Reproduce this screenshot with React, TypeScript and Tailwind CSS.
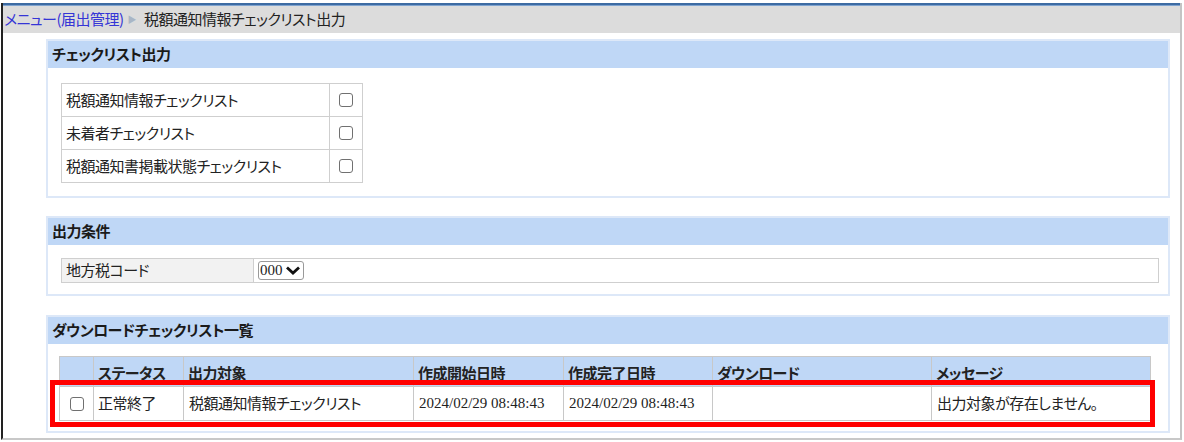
import React from "react";

const jp = { fontFamily: '"Noto Sans CJK JP", "Noto Sans", sans-serif', fontFeatureSettings: '"palt"', letterSpacing: "-0.5px" } as React.CSSProperties;
const serif = { fontFamily: '"Liberation Serif", serif', letterSpacing: "0px" } as React.CSSProperties;

function Box() {
  return <span className="inline-block w-[14px] h-[14px] border border-[#707070] rounded-[3px] bg-white" />;
}

function Section({ title, children, className }: { title: string; children: React.ReactNode; className?: string }) {
  return (
    <div className={"border-2 border-[#dde8f8] " + (className ?? "")}>
      <div className="h-[27px] bg-[#bfd7f6] flex items-center pl-[4px] text-[15px] font-bold text-[#1a1a1a]">{title}</div>
      {children}
    </div>
  );
}

export default function App() {
  const cols = [
    { w: 34, t: "" },
    { w: 90, t: "ステータス" },
    { w: 230, t: "出力対象" },
    { w: 150, t: "作成開始日時" },
    { w: 149, t: "作成完了日時" },
    { w: 219, t: "ダウンロード" },
    { w: 219, t: "メッセージ" },
  ];
  return (
    <div className="w-[1184px] h-[442px] bg-white overflow-hidden pt-[3px] text-[#222]" style={jp}>
      <div className="ml-[1px] w-[1181px] h-[437px] border-l-2 border-l-[#222] border-r-2 border-r-[#c4c4c4] border-b-2 border-b-[#c8c8c8]">
        <div className="h-[3px] border-t-2 border-t-[#3d6ba3] bg-[#7fa3cf]" />
        <div className="h-[27px] bg-[#dcdcdc] flex items-center pl-[1px] text-[15px]">
          <span className="text-[#3535d6]">メニュー(届出管理)</span>
          <span className="text-[#a9b6c6] text-[9px] ml-[4px] mr-[8px]">▶</span>
          <span className="text-[#222]">税額通知情報チェックリスト出力</span>
        </div>
        <div className="ml-[43px] mr-[10px] mt-[6px]">
          <Section title="チェックリスト出力">
            <div className="pt-[15px] pb-[13px] pl-[13px]">
              <table className="border-collapse text-[15px]">
                <tbody>
                  {["税額通知情報チェックリスト", "未着者チェックリスト", "税額通知書掲載状態チェックリスト"].map((t) => (
                    <tr key={t} className="h-[33px]">
                      <td className="border border-[#cfcfcf] w-[268px] pl-[4px] p-0">{t}</td>
                      <td className="border border-[#cfcfcf] w-[33px] text-center p-0 align-middle">
                        <div className="flex justify-center"><Box /></div>
                      </td>
                    </tr>
                  ))}
                </tbody>
              </table>
            </div>
          </Section>

          <Section title="出力条件" className="mt-[18px]">
            <div className="pt-[13px] pb-[11px] pl-[13px] pr-[9px]">
              <div className="flex h-[25px] border border-[#cfcfcf] text-[15px]">
                <div className="w-[192px] bg-[#f2f2f2] border-r border-r-[#cfcfcf] flex items-center pl-[4px]">地方税コード</div>
                <div className="flex items-center pl-[4px]">
                  <div className="h-[19px] w-[46px] border border-[#9a9a9a] rounded-[3px] flex items-center pl-[1px] gap-[2px] bg-white">
                    <span className="text-[15px] leading-none" style={serif}>000</span>
                    <svg width="16" height="11" viewBox="0 0 16 11"><path d="M2 2.5 L8 8 L14 2.5" fill="none" stroke="#111" strokeWidth="2.8" /></svg>
                  </div>
                </div>
              </div>
            </div>
          </Section>

          <Section title="ダウンロードチェックリスト一覧" className="mt-[19px]">
            <div className="pt-[12px] pb-[10px] pl-[11px]">
              <div className="relative w-[1091px]">
                <table className="border-collapse text-[15px] table-fixed w-[1091px]">
                  <colgroup>
                    {cols.map((c, i) => <col key={i} style={{ width: c.w }} />)}
                  </colgroup>
                  <thead>
                    <tr className="h-[30px] bg-[#bfd7f6]">
                      {cols.map((c, i) => (
                        <th key={i} className="border border-[#c8c8c8] text-left font-bold pl-[4px] pt-[3px] p-0">{c.t}</th>
                      ))}
                    </tr>
                  </thead>
                  <tbody>
                    <tr className="h-[34px]">
                      <td className="border border-[#c8c8c8] p-0"><div className="flex justify-center"><Box /></div></td>
                      <td className="border border-[#c8c8c8] pl-[4px] p-0">正常終了</td>
                      <td className="border border-[#c8c8c8] pl-[5px] p-0">税額通知情報チェックリスト</td>
                      <td className="border border-[#c8c8c8] pl-[5px] p-0" style={serif}>2024/02/29 08:48:43</td>
                      <td className="border border-[#c8c8c8] pl-[5px] p-0" style={serif}>2024/02/29 08:48:43</td>
                      <td className="border border-[#c8c8c8] p-0"></td>
                      <td className="border border-[#c8c8c8] pl-[5px] p-0">出力対象が存在しません。</td>
                    </tr>
                  </tbody>
                </table>
                <div className="absolute left-[-9px] right-[-5px] top-[24px] bottom-[-6px] border-[5px] border-[#ff0000] pointer-events-none" />
              </div>
            </div>
          </Section>
        </div>
      </div>
    </div>
  );
}
